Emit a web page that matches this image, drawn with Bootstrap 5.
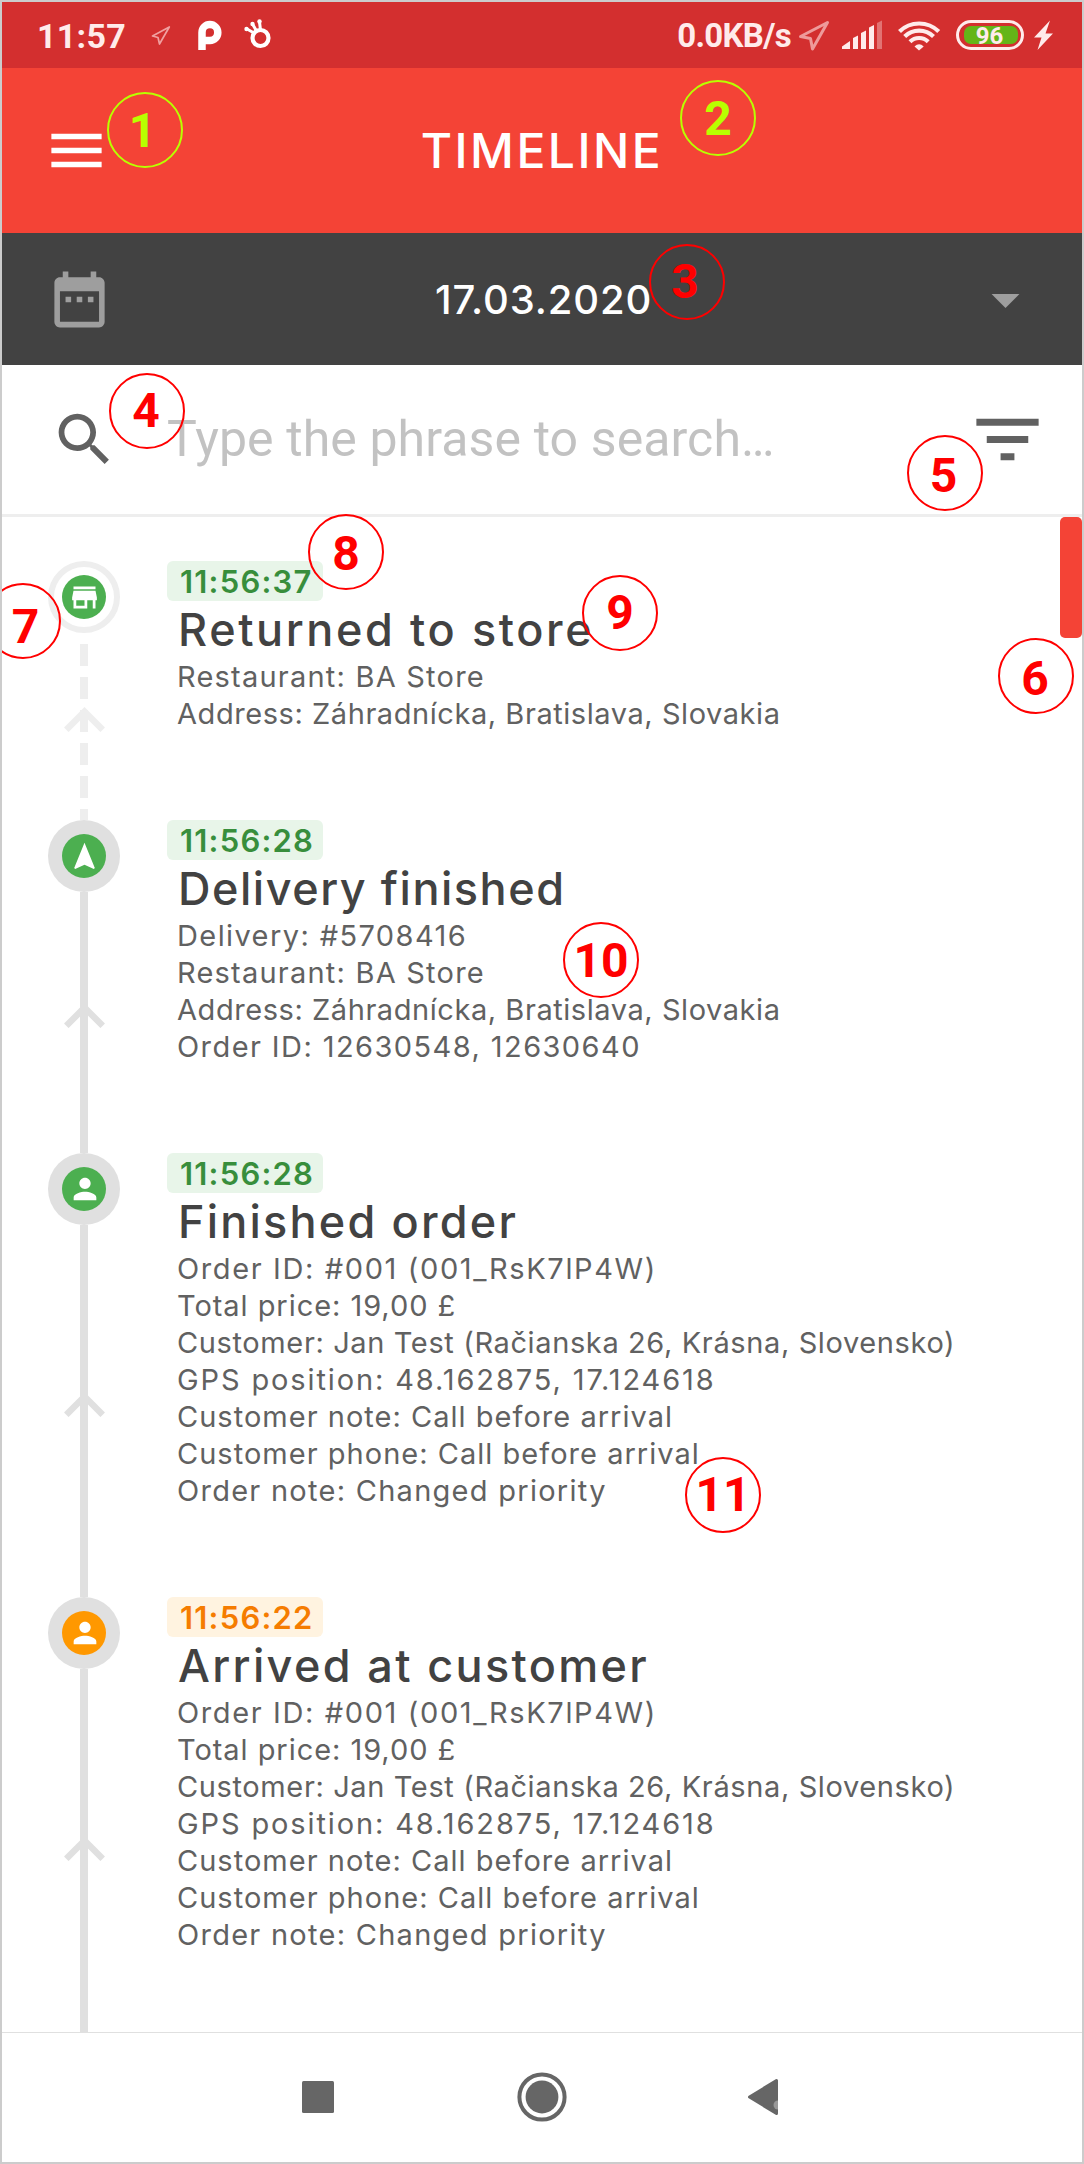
<!DOCTYPE html>
<html lang="en">
<head>
<meta charset="utf-8">
<meta name="viewport" content="width=device-width, initial-scale=1">
<title>Timeline</title>
<link href="https://cdn.jsdelivr.net/npm/bootstrap@5.3.0/dist/css/bootstrap.min.css" rel="stylesheet">
<style>
  body { background: #fff; font-family: Inter, "Noto Sans", sans-serif; }
  svg { display: block; flex: none; }
  .phone { width: 1084px; height: 2164px; border: 2px solid #ccc; background: #fff; }

  .statusbar { height: 66px; background: #d32f2f; color: #ffebeb; font: 700 34px/40px Roboto, sans-serif; padding: 6px 2px 0 35px; }
  .clock { width: 113px; letter-spacing: .3px; padding-top: 8px; }
  .speed { font-size: 33px; letter-spacing: -.7px; padding-top: 8px; margin-right: 2px; }
  .appbar { height: 165px; background: #f44336; padding: 0 41px; }
  .app-title { font-size: 48px; font-weight: 500; line-height: 60px; letter-spacing: 2.5px; color: #fff; }
  .datebar { height: 132px; background: #424242; padding: 0 43px 0 44px; }
  .date-text { font-size: 40px; font-weight: 500; line-height: 50px; letter-spacing: .85px; color: #fff; padding: 1px 0 0 2px; }
  .searchbar { height: 152px; border-bottom: 3px solid #eee; padding: 0 33px 0 48px; }
  .hint { font: 400 50px/60px Roboto, sans-serif; letter-spacing: .1px; color: #c2c2c2; padding: 0 0 2px 48px; }

  .feed { height: 1515px; padding: 44px 0 0 46px; }
  .rail { width: 72px; margin-right: 47px; }
  .node { width: 72px; height: 72px; background: #e0e0e0; }
  .node-open { background: #fff; border: 6px solid #eee; }
  .dot { width: 44px; height: 44px; background: #4caf50; }
  .dot svg { margin-left: 1px; }
  .dot-orange { background: #ff9800; }
  .link-solid { background: linear-gradient(#e0e0e0, #e0e0e0) center / 8px 100% no-repeat; color: #e0e0e0; }
  .link-dashed { background: repeating-linear-gradient(transparent 0 11px, #eee 11px 33px) center / 8px 100% no-repeat; color: #eee; }
  .link-solid svg, .link-dashed svg { margin: 0 0 14px 1px; }

  .stamp { width: 156px; height: 40px; border-radius: 6px; background: #e8f5e9; color: #388e3c; font-size: 31px; font-weight: 600; line-height: 42px; padding-left: 13px; letter-spacing: 1.2px; }
  .stamp-orange { background: #fff3e0; color: #f57c00; }
  .event-title { font-size: 45px; font-weight: 500; line-height: 57px; color: #424242; margin: 0; padding-left: 11px; }
  .t-returned { letter-spacing: 2.6px; }
  .t-delivery { letter-spacing: 1.53px; }
  .t-finished { letter-spacing: 2.2px; }
  .t-arrived { letter-spacing: 2.35px; }
  .details { font-size: 29px; font-weight: 400; line-height: 37px; color: #616161; padding: 0 0 88px 10px; margin: 0; }
  .details li { white-space: nowrap; }
  .l-restaurant { letter-spacing: 1.22px; }
  .l-address { letter-spacing: .56px; }
  .l-delivery { letter-spacing: 1.4px; }
  .l-ids { letter-spacing: 1.42px; }
  .l-order { letter-spacing: 1.62px; }
  .l-price { letter-spacing: .95px; }
  .l-customer { letter-spacing: .62px; }
  .l-gps { letter-spacing: 1.88px; }
  .l-note { letter-spacing: 1.02px; }
  .l-phone { letter-spacing: 1.02px; }
  .l-onote { letter-spacing: 1.27px; }

  .thumb { width: 22px; height: 121px; border-radius: 5px; background: #f44336; top: 515px; right: 0; }
  .navkeys { height: 130px; border-top: 1px solid #e0e0e0; padding: 0 303px 1px 300px; }
  .home-key { margin-left: 2px; }

  /* numbered callouts lying over the screen */
  .pin { position: absolute; width: 76px; height: 76px; border: 2px solid #f00; border-radius: 50%; color: #f00; font: 700 48px/74px Roboto, sans-serif; text-align: center; }
  .pin-lime { border-color: #b8ff00; color: #b8ff00; }
  .p1 { left: 105px; top: 90px; padding-right: 5px; }
  .p2 { left: 678px; top: 78px; }
  .p3 { left: 647px; top: 242px; padding-right: 4px; line-height: 71px; }
  .p4 { left: 107px; top: 371px; line-height: 72px; padding-right: 2px; }
  .p5 { left: 905px; top: 433px; line-height: 77px; padding-right: 3px; }
  .p6 { left: 996px; top: 636px; line-height: 77px; padding-right: 2px; }
  .p7 { left: -17px; top: 581px; line-height: 84px; padding-left: 5px; }
  .p8 { left: 306px; top: 512px; line-height: 76px; }
  .p9 { left: 580px; top: 573px; line-height: 72px; }
  .p10 { left: 561px; top: 920px; }
  .p11 { left: 683px; top: 1455px; line-height: 72px; }
</style>
<script src="https://cdn.jsdelivr.net/npm/bootstrap@5.3.0/dist/js/bootstrap.bundle.min.js"></script>
</head>
<body>
<svg width="0" height="0" class="position-absolute" aria-hidden="true">
  <symbol id="chevron" viewBox="0 0 41 25"><path d="M2.3 22.8 20.5 4.6l18.2 18.2" fill="none" stroke="currentColor" stroke-width="6.4"/></symbol>
  <symbol id="person" viewBox="0 0 24 24"><path fill="#fff" d="M12 12c2.21 0 4-1.79 4-4s-1.79-4-4-4-4 1.79-4 4 1.79 4 4 4zm0 2c-2.67 0-8 1.34-8 4v2h16v-2c0-2.66-5.33-4-8-4z"/></symbol>
</svg>

<div class="phone position-relative overflow-hidden d-flex flex-column">
  <div class="statusbar d-flex align-items-start flex-none">
    <span class="clock">11:57</span>
    <svg width="253" height="44" viewBox="150 8 253 44">
      <path d="M152.500 36 169.300 27 159.500 44 158 37.500Z" fill="none" stroke="#f0a0a0" stroke-width="1.700" stroke-linejoin="round"/>
      <path d="M202 50V32.500a7.900 7.900 0 1 1 8 7.900h-8" fill="none" stroke="#fff" stroke-width="7.500"/>
      <circle cx="260.500" cy="38" r="8" fill="none" stroke="#fff" stroke-width="4.200"/>
      <path d="M254 33l-7-4M256.500 31l-4-7M260.500 30l-1-8" stroke="#fff" stroke-width="3" fill="none"/>
      <g fill="#fff"><circle cx="246.500" cy="29" r="2.200"/><circle cx="252.500" cy="24" r="2.200"/><circle cx="259.500" cy="21.500" r="2.200"/></g>
    </svg>
    <span class="speed ms-auto">0.0KB/s</span>
    <svg width="287" height="44" viewBox="793 8 287 44" fill="#ffebeb">
      <path d="M800.500 36.500 827.500 22.500 812.500 49 810.500 38.500Z" fill="none" stroke="#ee9a9a" stroke-width="3" stroke-linejoin="round"/>
      <path d="M842 46.500 850 41V49H842ZM853 38l5-2.500V49h-5ZM861 33l5-2.500V49h-5ZM869 27.500l5-2.500V49h-5Z"/>
      <path d="M877 23l5-2.500V49h-5Z" fill="#e27373"/>
      <g fill="none" stroke="#ffebeb" stroke-width="4.200"><path d="M899.500 31.500a28 28 0 0 1 39.200 0"/><path d="M904.700 36.500a20.500 20.500 0 0 1 28.800 0"/><path d="M910 41.700a13 13 0 0 1 18.200 0"/></g>
      <path d="M914.500 46.500q4.600-4.500 9.200 0L919 50.500Z"/>
      <rect x="957.500" y="21.500" width="65" height="27" rx="13.500" fill="none" stroke="#ffebeb" stroke-width="3"/>
      <rect x="964" y="26" width="54" height="18" rx="7" fill="#64b518"/>
      <text x="989.500" y="43.800" text-anchor="middle" font-family="Roboto" font-weight="700" font-size="24">96</text>
      <path d="M1050 20.500 1034 37.500h7.500L1037.500 50 1053 33.500h-7.500Z"/>
    </svg>
  </div>

  <header class="appbar d-flex align-items-center">
    <svg width="67" height="67" viewBox="0 0 24 24" fill="#fff"><path d="M3 18h18v-2H3v2zm0-5h18v-2H3v2zm0-7v2h18V6H3z"/></svg>
    <h1 class="app-title flex-fill text-center m-0">TIMELINE</h1>
    <svg width="67" height="67"></svg>
  </header>

  <div class="datebar d-flex align-items-center">
    <svg width="67" height="67" viewBox="0 0 24 24" fill="#9e9e9e"><path d="M9 11H7v2h2v-2zm4 0h-2v2h2v-2zm4 0h-2v2h2v-2zm2-7h-1V2h-2v2H8V2H6v2H5c-1.110 0-1.990.9-1.990 2L3 20c0 1.100.89 2 2 2h14c1.100 0 2-.9 2-2V6c0-1.100-.9-2-2-2zm0 16H5V9h14v11z"/></svg>
    <span class="date-text flex-fill text-center">17.03.2020</span>
    <svg width="67" height="67" viewBox="0 0 24 24" fill="#9e9e9e"><path d="M7 10l5 5 5-5z"/></svg>
  </div>

  <div class="searchbar d-flex align-items-center">
    <svg width="69" height="69" viewBox="0 0 24 24" fill="#616161"><path d="M15.500 14h-.79l-.28-.27C15.410 12.590 16 11.110 16 9.500 16 5.910 13.090 3 9.500 3S3 5.910 3 9.500 5.910 16 9.500 16c1.610 0 3.090-.59 4.230-1.570l.27.28v.79l5 4.990L20.490 19l-4.990-5zm-6 0C7.010 14 5 11.990 5 9.500S7.010 5 9.500 5 14 7.010 14 9.500 11.990 14 9.500 14z"/></svg>
    <span class="hint flex-fill">Type the phrase to search…</span>
    <svg width="83" height="83" viewBox="0 0 24 24" fill="#616161"><path d="M10 18h4v-2h-4v2zM3 6v2h18V6H3zm3 7h12v-2H6v2z"/></svg>
  </div>

  <main class="feed overflow-hidden">
    <article class="d-flex">
      <div class="rail d-flex flex-column">
        <div class="node node-open rounded-circle d-flex align-items-center justify-content-center">
          <div class="dot rounded-circle d-flex align-items-center justify-content-center flex-shrink-0"><svg width="33" height="33" viewBox="0 0 24 24" fill="#fff"><path d="M20 4H4v2h16V4zm1 10v-2l-1-5H4l-1 5v2h1v6h10v-6h4v6h2v-6h1zm-9 4H6v-4h6v4z"/></svg></div>
        </div>
        <div class="link-dashed flex-fill d-flex align-items-center justify-content-center"><svg width="41" height="25"><use href="#chevron"/></svg></div>
      </div>
      <div>
        <div class="stamp">11:56:37</div>
        <h2 class="event-title t-returned">Returned to store</h2>
        <ul class="details list-unstyled">
          <li class="l-restaurant">Restaurant: BA Store</li>
          <li class="l-address">Address: Záhradnícka, Bratislava, Slovakia</li>
        </ul>
      </div>
    </article>

    <article class="d-flex">
      <div class="rail d-flex flex-column">
        <div class="node rounded-circle d-flex align-items-center justify-content-center">
          <div class="dot rounded-circle d-flex align-items-center justify-content-center"><svg width="33" height="33" viewBox="0 0 24 24" fill="#fff"><path d="M12 2L4.500 20.290l.71.71L12 18l6.790 3 .71-.71z"/></svg></div>
        </div>
        <div class="link-solid flex-fill d-flex align-items-center justify-content-center"><svg width="41" height="25"><use href="#chevron"/></svg></div>
      </div>
      <div>
        <div class="stamp">11:56:28</div>
        <h2 class="event-title t-delivery">Delivery finished</h2>
        <ul class="details list-unstyled">
          <li class="l-delivery">Delivery: #5708416</li>
          <li class="l-restaurant">Restaurant: BA Store</li>
          <li class="l-address">Address: Záhradnícka, Bratislava, Slovakia</li>
          <li class="l-ids">Order ID: 12630548, 12630640</li>
        </ul>
      </div>
    </article>

    <article class="d-flex">
      <div class="rail d-flex flex-column">
        <div class="node rounded-circle d-flex align-items-center justify-content-center">
          <div class="dot rounded-circle d-flex align-items-center justify-content-center"><svg width="34" height="34"><use href="#person"/></svg></div>
        </div>
        <div class="link-solid flex-fill d-flex align-items-center justify-content-center"><svg width="41" height="25"><use href="#chevron"/></svg></div>
      </div>
      <div>
        <div class="stamp">11:56:28</div>
        <h2 class="event-title t-finished">Finished order</h2>
        <ul class="details list-unstyled">
          <li class="l-order">Order ID: #001 (001_RsK7lP4W)</li>
          <li class="l-price">Total price: 19,00 £</li>
          <li class="l-customer">Customer: Jan Test (Račianska 26, Krásna, Slovensko)</li>
          <li class="l-gps">GPS position: 48.162875, 17.124618</li>
          <li class="l-note">Customer note: Call before arrival</li>
          <li class="l-phone">Customer phone: Call before arrival</li>
          <li class="l-onote">Order note: Changed priority</li>
        </ul>
      </div>
    </article>

    <article class="d-flex">
      <div class="rail d-flex flex-column">
        <div class="node rounded-circle d-flex align-items-center justify-content-center">
          <div class="dot dot-orange rounded-circle d-flex align-items-center justify-content-center"><svg width="34" height="34"><use href="#person"/></svg></div>
        </div>
        <div class="link-solid flex-fill d-flex align-items-center justify-content-center"><svg width="41" height="25"><use href="#chevron"/></svg></div>
      </div>
      <div>
        <div class="stamp stamp-orange">11:56:22</div>
        <h2 class="event-title t-arrived">Arrived at customer</h2>
        <ul class="details list-unstyled">
          <li class="l-order">Order ID: #001 (001_RsK7lP4W)</li>
          <li class="l-price">Total price: 19,00 £</li>
          <li class="l-customer">Customer: Jan Test (Račianska 26, Krásna, Slovensko)</li>
          <li class="l-gps">GPS position: 48.162875, 17.124618</li>
          <li class="l-note">Customer note: Call before arrival</li>
          <li class="l-phone">Customer phone: Call before arrival</li>
          <li class="l-onote">Order note: Changed priority</li>
        </ul>
      </div>
    </article>
  </main>

  <nav class="navkeys d-flex align-items-center justify-content-between">
    <svg width="32" height="50" viewBox="0 0 32 50"><rect y="9" width="32" height="32" rx="1.500" fill="#666"/></svg>
    <svg class="home-key" width="50" height="50" viewBox="0 0 50 50"><circle cx="25" cy="25" r="22.600" fill="none" stroke="#666" stroke-width="4"/><circle cx="25" cy="25" r="16.400" fill="#666"/></svg>
    <svg width="32" height="50" viewBox="0 0 32 50"><path d="M2.500 25 29.500 8.500V41.500Z" fill="#666" stroke="#666" stroke-width="3" stroke-linejoin="round"/><path d="M31 28.500a4.500 4.500 0 0 0 0 9Z" fill="#999"/></svg>
  </nav>

  <div class="thumb position-absolute"></div>
  <div class="pin pin-lime p1">1</div>
  <div class="pin pin-lime p2">2</div>
  <div class="pin p3">3</div>
  <div class="pin p4">4</div>
  <div class="pin p5">5</div>
  <div class="pin p6">6</div>
  <div class="pin p7">7</div>
  <div class="pin p8">8</div>
  <div class="pin p9">9</div>
  <div class="pin p10">10</div>
  <div class="pin p11">11</div>
</div>
</body>
</html>
